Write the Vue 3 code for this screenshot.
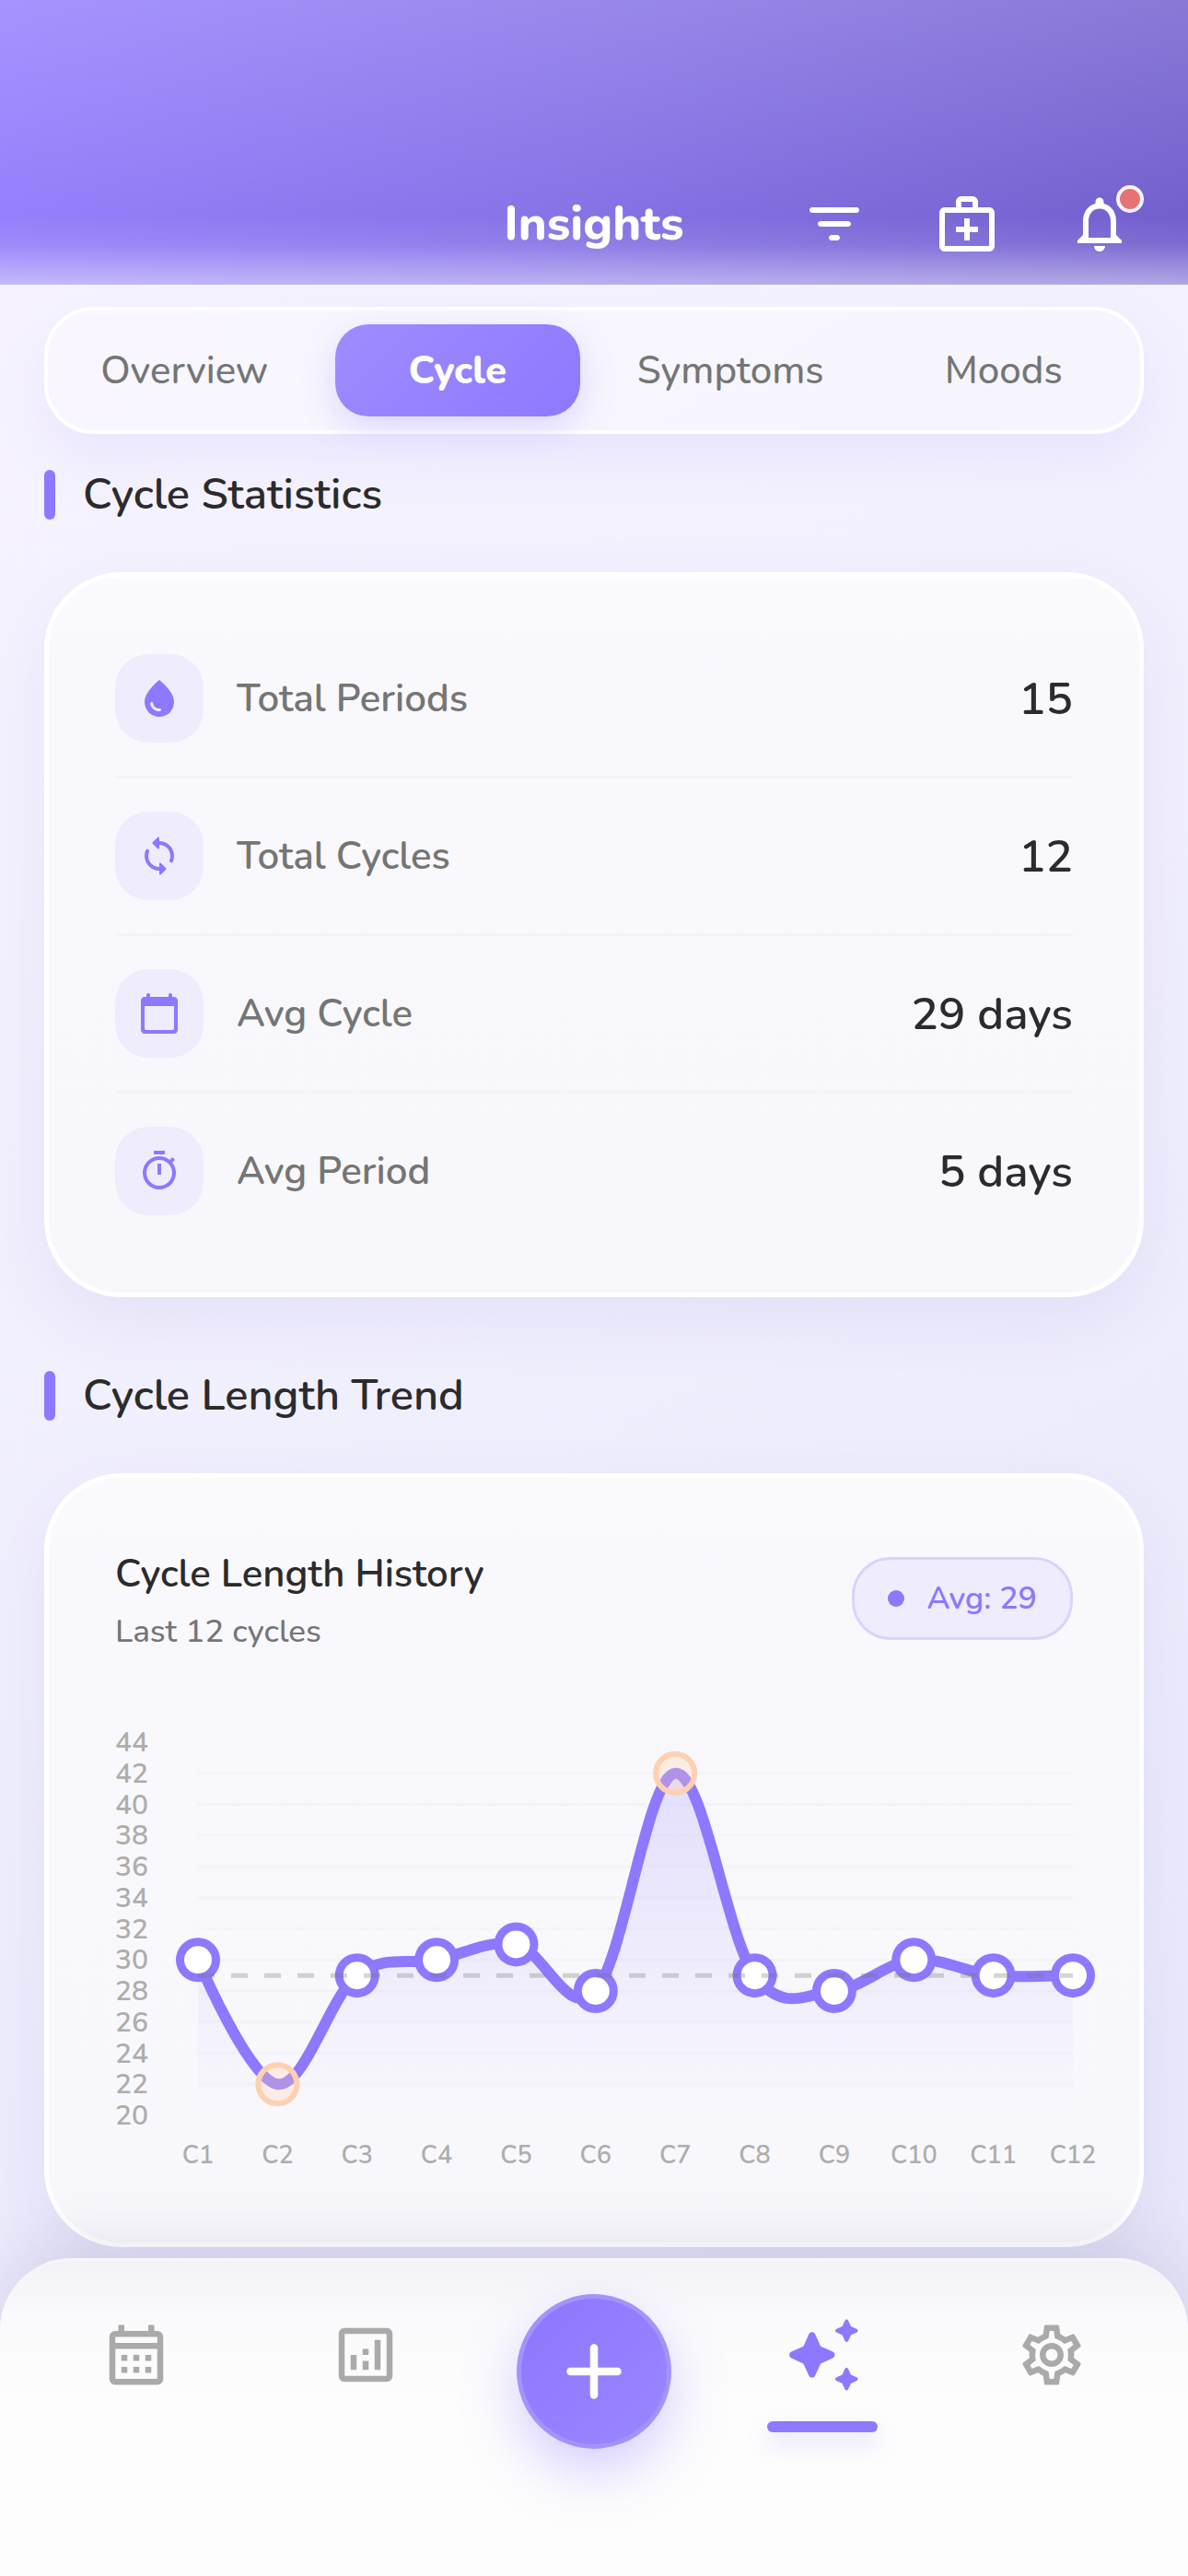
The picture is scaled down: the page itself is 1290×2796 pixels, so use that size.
<template>
  <div class="page">
    <header class="header">
      <h1 class="title">Insights</h1>
      <div class="actions">
        <button class="icon-btn" aria-label="Filter">
          <svg viewBox="0 0 24 24"><path :d="icons.filter" /></svg>
        </button>
        <button class="icon-btn" aria-label="Medical">
          <svg viewBox="0 0 24 24"><path :d="icons.medical" /></svg>
        </button>
        <button class="icon-btn" aria-label="Notifications">
          <svg viewBox="0 0 24 24"><path :d="icons.bell" /></svg>
          <span class="dot"></span>
        </button>
      </div>
    </header>

    <main class="content">
      <div class="tabs">
        <button
          v-for="tab in tabs"
          :key="tab"
          class="tab"
          :class="{ active: tab === activeTab }"
          @click="activeTab = tab"
        >
          {{ tab }}
        </button>
      </div>

      <h2 class="section-title">Cycle Statistics</h2>
      <section class="card stats">
        <div v-for="stat in stats" :key="stat.label" class="stat">
          <span class="stat-icon">
            <svg viewBox="0 0 24 24"><path :d="icons[stat.icon]" /></svg>
          </span>
          <span class="stat-label">{{ stat.label }}</span>
          <span class="stat-value">{{ stat.value }}</span>
        </div>
      </section>

      <h2 class="section-title second">Cycle Length Trend</h2>
      <section class="card trend">
        <div class="trend-head">
          <div>
            <h3 class="trend-title">Cycle Length History</h3>
            <p class="trend-sub">Last {{ cycles.length }} cycles</p>
          </div>
          <div class="avg"><i></i>Avg: {{ average }}</div>
        </div>
        <svg class="chart" viewBox="0 0 1040 492">
          <defs>
            <linearGradient id="area" x1="0" y1="0" x2="0" y2="1">
              <stop offset="0" stop-color="#8e78ff" stop-opacity="0.2" />
              <stop offset="1" stop-color="#8e78ff" stop-opacity="0" />
            </linearGradient>
          </defs>
          <line
            v-for="n in gridLines"
            :key="'g' + n"
            class="grid"
            :x1="left"
            :x2="right"
            :y1="yOf(n)"
            :y2="yOf(n)"
          />
          <text v-for="n in ticks" :key="'t' + n" class="tick" x="0" :y="yOf(n) + 10">{{ n }}</text>
          <path :d="areaPath" fill="url(#area)" />
          <path :d="linePath" class="line" />
          <template v-for="(p, i) in points" :key="i">
            <circle v-if="p.outlier" class="outlier" :cx="p.x" :cy="p.y" r="21" />
            <template v-else>
              <circle class="point" :cx="p.x" :cy="p.y" r="24" />
              <circle class="point-inner" :cx="p.x" :cy="p.y" r="15" />
            </template>
            <text class="label" :x="p.x" y="478">C{{ i + 1 }}</text>
          </template>
          <line class="avg-line" :x1="left" :x2="right" :y1="yOf(average)" :y2="yOf(average)" />
        </svg>
      </section>
    </main>

    <nav class="nav">
      <a href="#calendar" class="nav-item" aria-label="Calendar">
        <svg viewBox="0 0 24 24"><path :d="icons.month" /></svg>
      </a>
      <a href="#analytics" class="nav-item" aria-label="Analytics">
        <svg viewBox="0 0 24 24"><path :d="icons.analytics" /></svg>
      </a>
      <div class="nav-item">
        <button class="fab" aria-label="Add">
          <svg viewBox="0 0 24 24"><path :d="icons.add" /></svg>
        </button>
      </div>
      <a href="#insights" class="nav-item current" aria-label="Insights">
        <svg viewBox="0 0 24 24"><path :d="icons.sparkle" /></svg>
      </a>
      <a href="#settings" class="nav-item" aria-label="Settings">
        <svg viewBox="0 0 24 24"><path :d="icons.settings" /></svg>
      </a>
    </nav>
  </div>
</template>

<script setup>
import { ref } from "vue";

const tabs = ["Overview", "Cycle", "Symptoms", "Moods"];
const activeTab = ref("Cycle");

const stats = [
  { icon: "drop", label: "Total Periods", value: "15" },
  { icon: "sync", label: "Total Cycles", value: "12" },
  { icon: "calendar", label: "Avg Cycle", value: "29 days" },
  { icon: "timer", label: "Avg Period", value: "5 days" },
];

const cycles = [30, 22, 29, 30, 31, 28, 42, 29, 28, 30, 29, 29];
const average = 29;

// plot area inside the chart viewBox
const left = 90;
const right = 1040;
const top = 21;
const bottom = 426;
const min = 20;
const max = 44;

const yOf = (v) => bottom - ((v - min) / (max - min)) * (bottom - top);
const ticks = [];
for (let n = max; n >= min; n -= 2) ticks.push(n);
const gridLines = ticks.slice(1, -1);

const points = cycles.map((v, i) => ({
  x: left + (i * (right - left)) / (cycles.length - 1),
  y: yOf(v),
  outlier: v < 24 || v > 38,
}));

// smooth line: each control point follows the slope of the neighbours
const smoothness = 0.35;
let linePath = `M${points[0].x} ${points[0].y}`;
let dx = 0;
let dy = 0;
for (let i = 1; i < points.length; i++) {
  const prev = points[i - 1];
  const cur = points[i];
  const next = points[i + 1] || cur;
  const c1 = `${prev.x + dx} ${prev.y + dy}`;
  dx = ((next.x - prev.x) / 2) * smoothness;
  dy = ((next.y - prev.y) / 2) * smoothness;
  linePath += ` C${c1} ${cur.x - dx} ${cur.y - dy} ${cur.x} ${cur.y}`;
}
const areaPath = `${linePath} L${right} ${bottom} L${left} ${bottom} Z`;

const icons = {
  filter:
    "M4 6h16c.55 0 1 .45 1 1s-.45 1-1 1H4c-.55 0-1-.45-1-1s.45-1 1-1zM7 11h10c.55 0 1 .45 1 1s-.45 1-1 1H7c-.55 0-1-.45-1-1s.45-1 1-1zM11 16h2c.55 0 1 .45 1 1s-.45 1-1 1h-2c-.55 0-1-.45-1-1s.45-1 1-1z",
  medical:
    "M20 6h-4V4c0-1.100-.9-2-2-2h-4c-1.100 0-2 .9-2 2v2H4c-1.100 0-2 .9-2 2v12c0 1.100.9 2 2 2h16c1.100 0 2-.9 2-2V8c0-1.100-.9-2-2-2zM10 4h4v2h-4V4zm10 16H4V8h16v12zM13 10h-2v3H8v2h3v3h2v-3h3v-2h-3z",
  bell: "M12 22c1.100 0 2-.9 2-2h-4c0 1.100.9 2 2 2zm6-6v-5c0-3.070-1.630-5.640-4.500-6.320V4c0-.83-.67-1.500-1.500-1.500s-1.500.67-1.500 1.500v.68C7.640 5.360 6 7.920 6 11v5l-2 2v1h16v-1l-2-2zm-2 1H8v-6c0-2.480 1.510-4.500 4-4.500s4 2.020 4 4.500v6z",
  drop: "M12 2c-5.330 4.550-8 8.480-8 11.800 0 4.980 3.800 8.200 8 8.200s8-3.220 8-8.200C20 10.480 17.330 6.550 12 2zM7.830 14c.37 0 .67.26.74.62.41 2.220 2.280 2.980 3.640 2.870.43-.02.79.32.79.75 0 .4-.32.73-.72.75-2.130.13-4.620-1.090-5.190-4.120-.08-.45.28-.87.74-.87z",
  sync: "M12 4V2.210c0-.45-.54-.67-.85-.35l-2.800 2.790c-.2.2-.2.51 0 .71l2.790 2.790c.32.31.86.09.86-.36V6c3.310 0 6 2.690 6 6 0 .79-.15 1.560-.44 2.250-.15.36-.04.77.23 1.040.51.51 1.370.33 1.640-.34.37-.91.57-1.910.57-2.950 0-4.420-3.580-8-8-8zm0 14c-3.310 0-6-2.690-6-6 0-.79.15-1.560.44-2.250.15-.36.04-.77-.23-1.040-.51-.51-1.370-.33-1.640.34C4.200 9.960 4 10.960 4 12c0 4.420 3.580 8 8 8v1.790c0 .45.54.67.85.35l2.790-2.790c.2-.2.2-.51 0-.71l-2.790-2.790c-.31-.31-.85-.09-.85.36V18z",
  calendar:
    "M20 3h-1V2c0-.55-.45-1-1-1s-1 .45-1 1v1H7V2c0-.55-.45-1-1-1s-1 .45-1 1v1H4c-1.100 0-2 .9-2 2v16c0 1.100.9 2 2 2h16c1.100 0 2-.9 2-2V5c0-1.100-.9-2-2-2zm-1 18H5c-.55 0-1-.45-1-1V8h16v12c0 .55-.45 1-1 1z",
  timer:
    "M15 1H9v2h6V1zm-4 13h2V8h-2v6zm8.030-6.610 1.420-1.420c-.43-.51-.9-.99-1.410-1.410l-1.420 1.420C16.070 4.740 14.120 4 12 4c-4.970 0-9 4.030-9 9s4.020 9 9 9 9-4.030 9-9c0-2.120-.74-4.070-1.970-5.610zM12 20c-3.870 0-7-3.130-7-7s3.130-7 7-7 7 3.130 7 7-3.130 7-7 7z",
  month:
    "M19 4h-1V2h-2v2H8V2H6v2H5c-1.110 0-1.990.9-1.990 2L3 20c0 1.100.89 2 2 2h14c1.100 0 2-.9 2-2V6c0-1.100-.9-2-2-2zm0 16H5V10h14v10zm0-12H5V6h14v2zM9 14H7v-2h2v2zm4 0h-2v-2h2v2zm4 0h-2v-2h2v2zm-8 4H7v-2h2v2zm4 0h-2v-2h2v2zm4 0h-2v-2h2v2z",
  analytics:
    "M19 3H5c-1.100 0-2 .9-2 2v14c0 1.100.9 2 2 2h14c1.100 0 2-.9 2-2V5c0-1.100-.9-2-2-2zm0 16H5V5h14v14zM7 12h2v5H7zM15 7h2v10h-2zM11 14h2v3h-2zM11 10h2v2h-2z",
  add: "M18 13h-5v5c0 .55-.45 1-1 1s-1-.45-1-1v-5H6c-.55 0-1-.45-1-1s.45-1 1-1h5V6c0-.55.45-1 1-1s1 .45 1 1v5h5c.55 0 1 .45 1 1s-.45 1-1 1z",
  sparkle:
    "M19.460 8l.79-1.750L22 5.460c.39-.18.39-.73 0-.91l-1.750-.79L19.460 2c-.18-.39-.73-.39-.91 0l-.79 1.750L16 4.540c-.39.18-.39.73 0 .91l1.750.79L18.540 8c.18.39.74.39.92 0zM11.500 9.500L9.910 6c-.35-.78-1.470-.78-1.820 0L6.500 9.500 3 11.090c-.78.36-.78 1.470 0 1.820l3.500 1.590L8.090 18c.36.78 1.470.78 1.820 0l1.590-3.500 3.500-1.590c.78-.36.78-1.470 0-1.820L11.500 9.500zM18.540 16l-.79 1.750L16 18.540c-.39.18-.39.73 0 .91l1.750.79L18.540 22c.18.39.73.39.91 0l.79-1.750L22 19.460c.39-.18.39-.73 0-.91l-1.750-.79L19.460 16c-.18-.39-.74-.39-.92 0z",
  settings:
    "M19.430 12.980c.04-.32.07-.64.07-.98 0-.34-.03-.66-.07-.98l2.110-1.650c.19-.15.24-.42.12-.64l-2-3.460c-.09-.16-.26-.25-.44-.25-.06 0-.12.01-.17.03l-2.490 1c-.52-.4-1.080-.73-1.690-.98l-.38-2.650C14.460 2.180 14.250 2 14 2h-4c-.25 0-.46.18-.49.42l-.38 2.650c-.61.25-1.170.59-1.690.98l-2.490-1c-.06-.02-.12-.03-.18-.03-.17 0-.34.09-.43.25l-2 3.460c-.13.22-.07.49.12.64l2.110 1.650c-.04.32-.07.65-.07.98 0 .33.03.66.07.98l-2.110 1.650c-.19.15-.24.42-.12.64l2 3.460c.09.16.26.25.44.25.06 0 .12-.01.17-.03l2.490-1c.52.4 1.080.73 1.690.98l.38 2.650c.03.24.24.42.49.42h4c.25 0 .46-.18.49-.42l.38-2.650c.61-.25 1.170-.59 1.690-.98l2.490 1c.06.02.12.03.18.03.17 0 .34-.09.43-.25l2-3.460c.12-.22.07-.49-.12-.64l-2.110-1.650zm-1.980-1.710c.04.31.05.52.05.73 0 .21-.02.43-.05.73l-.14 1.130.89.7 1.080.84-.7 1.210-1.270-.51-1.040-.42-.9.68c-.43.32-.84.56-1.250.73l-1.060.43-.16 1.130-.2 1.350h-1.400l-.19-1.350-.16-1.130-1.060-.43c-.43-.18-.83-.41-1.230-.71l-.91-.7-1.060.43-1.270.51-.7-1.210 1.080-.84.89-.7-.14-1.130c-.03-.31-.05-.54-.05-.74s.02-.43.05-.73l.14-1.130-.89-.7-1.080-.84.7-1.210 1.270.51 1.040.42.9-.68c.43-.32.84-.56 1.250-.73l1.060-.43.16-1.130.2-1.350h1.390l.19 1.350.16 1.130 1.060.43c.43.18.83.41 1.230.71l.91.7 1.060-.43 1.270-.51.7 1.210-1.070.85-.89.7.14 1.130zM12 8c-2.210 0-4 1.790-4 4s1.790 4 4 4 4-1.790 4-4-1.790-4-4-4zm0 6c-1.100 0-2-.9-2-2s.9-2 2-2 2 .9 2 2-.9 2-2 2z",
};
</script>

<style>
body {
  margin: 0;
}
</style>

<style scoped>
.page {
  min-height: 100vh;
  box-sizing: border-box;
  padding-bottom: 345px;
  background: linear-gradient(150deg, #f8f4ff 0%, #f0effe 50%, #e6e6fa 100%);
  color: #2b2b2b;
  font-family: "Nunito", "Lato", sans-serif;
}
svg {
  display: block;
  fill: currentColor;
}
button {
  border: none;
  padding: 0;
  background: none;
  color: inherit;
  font: inherit;
}
h1,
h2,
h3,
p {
  margin: 0;
}

.header {
  height: 309px;
  box-sizing: border-box;
  padding: 0 60px 30px;
  display: grid;
  grid-template-columns: 1fr auto 1fr;
  align-items: end;
  color: #fff;
  background: linear-gradient(
      to bottom,
      rgba(255, 255, 255, 0) 76%,
      rgba(255, 255, 255, 0.1) 86%,
      rgba(255, 255, 255, 0.46)
    ),
    linear-gradient(to bottom, rgba(255, 255, 255, 0.16), rgba(255, 255, 255, 0) 85%),
    linear-gradient(110deg, #967fff 0%, #8570e6 50%, #705ccb 100%);
}
.title {
  grid-column: 2;
  font-size: 52px;
  line-height: 72px;
  font-weight: 800;
}
.actions {
  grid-column: 3;
  display: flex;
  justify-content: flex-end;
  gap: 72px;
}
.icon-btn {
  position: relative;
  width: 72px;
  height: 72px;
}
.dot {
  position: absolute;
  top: -6px;
  right: -12px;
  width: 22px;
  height: 22px;
  border: 4px solid #f7f4ff;
  border-radius: 50%;
  background: #e57373;
}

.content {
  padding: 24px 48px 0;
}
.tabs {
  display: flex;
  border: 4px solid #fff;
  border-radius: 54px;
  background: rgba(255, 255, 255, 0.3);
  box-shadow: 0 24px 60px rgba(142, 120, 255, 0.1);
}
.tab {
  flex: 1;
  height: 100px;
  margin: 15px;
  border-radius: 36px;
  color: #757575;
  font-size: 42px;
  font-weight: 500;
}
.tab.active {
  background: linear-gradient(135deg, #9f8cff, #8e78ff);
  box-shadow: 0 12px 36px rgba(142, 120, 255, 0.25);
  color: #fff;
  font-weight: 800;
}

.section-title {
  display: flex;
  align-items: center;
  gap: 30px;
  margin: 39px 0 57px;
  font-size: 47px;
  line-height: 54px;
  font-weight: 600;
}
.section-title::before {
  content: "";
  width: 12px;
  height: 54px;
  border-radius: 6px;
  background: #8e78ff;
}
.second {
  margin-top: 80px;
}

.card {
  border: 5px solid #fff;
  border-radius: 84px;
  background: linear-gradient(to bottom, #fbfbfe, #f9f8fd 100px, #f8f8fc);
  box-shadow: 0 24px 72px rgba(80, 70, 160, 0.08);
}
.stats {
  padding: 48px 72px;
}
.stat {
  display: flex;
  align-items: center;
  gap: 36px;
  padding: 36px 0;
}
.stat + .stat {
  border-top: 3px solid #f3f3f8;
}
.stat-icon {
  padding: 24px;
  border-radius: 36px;
  background: #efecfd;
  color: #8e78ff;
}
.stat-icon svg {
  width: 48px;
  height: 48px;
}
.stat-label {
  flex: 1;
  color: #757575;
  font-size: 42px;
  font-weight: 600;
}
.stat-value {
  font-size: 49px;
  font-weight: 600;
}

.trend {
  padding: 72px;
}
.trend-head {
  display: flex;
  justify-content: space-between;
  align-items: center;
  margin-bottom: 76px;
}
.trend-title {
  font-size: 42px;
  line-height: 66px;
  font-weight: 600;
}
.trend-sub {
  margin-top: 6px;
  color: #757575;
  font-size: 35px;
  line-height: 46px;
  font-weight: 500;
}
.avg {
  display: flex;
  align-items: center;
  gap: 24px;
  padding: 21px 36px;
  border: 3px solid #dad3fd;
  border-radius: 42px;
  background: #efecfd;
  color: #8e78ff;
  font-size: 34px;
  line-height: 42px;
  font-weight: 600;
}
.avg i {
  width: 18px;
  height: 18px;
  border-radius: 50%;
  background: #8e78ff;
}

.chart {
  width: 100%;
  overflow: visible;
}
.grid {
  stroke: #f4f4f8;
  stroke-width: 3;
}
.tick,
.label {
  fill: #adadad;
  font-size: 30px;
  font-weight: 600;
}
.label {
  font-size: 27px;
  text-anchor: middle;
}
.line {
  fill: none;
  stroke: #8e78ff;
  stroke-width: 12;
}
.point {
  fill: #8e78ff;
}
.point-inner {
  fill: #fff;
}
.outlier {
  fill: rgba(255, 208, 176, 0.3);
  stroke: #ffd0b0;
  stroke-width: 6;
}
.avg-line {
  stroke: rgba(117, 117, 117, 0.3);
  stroke-width: 5;
  stroke-dasharray: 18 18;
}

.nav {
  position: fixed;
  left: 0;
  right: 0;
  bottom: 0;
  height: 345px;
  box-sizing: border-box;
  padding: 36px 24px 0;
  display: flex;
  align-items: flex-start;
  border-top: 3px solid #f7f7f9;
  border-radius: 78px 78px 0 0;
  background: linear-gradient(to bottom, #f3f3f7, #fafafc 60px, #fdfdfd 160px);
  box-shadow: 0 -12px 72px rgba(40, 30, 90, 0.12);
}
.nav-item {
  flex: 1;
  height: 132px;
  display: flex;
  flex-direction: column;
  align-items: center;
  justify-content: center;
  color: #aaa;
}
.nav-item > svg {
  width: 78px;
  height: 78px;
}
.current {
  position: relative;
  color: #8e78ff;
}
.current > svg {
  width: 90px;
  height: 90px;
}
.current::after {
  content: "";
  position: absolute;
  bottom: -18px;
  width: 120px;
  height: 12px;
  border-radius: 6px;
  background: #8e78ff;
  box-shadow: 0 12px 24px rgba(142, 120, 255, 0.25);
}
.fab {
  flex: none;
  display: grid;
  place-items: center;
  width: 168px;
  height: 168px;
  margin-top: 36px;
  border: 5px solid #a593fb;
  border-radius: 50%;
  background: linear-gradient(135deg, #8e76ff, #9b86ff);
  box-shadow: 0 24px 60px rgba(142, 120, 255, 0.35);
  color: #fff;
}
.fab svg {
  width: 102px;
  height: 102px;
}
</style>
